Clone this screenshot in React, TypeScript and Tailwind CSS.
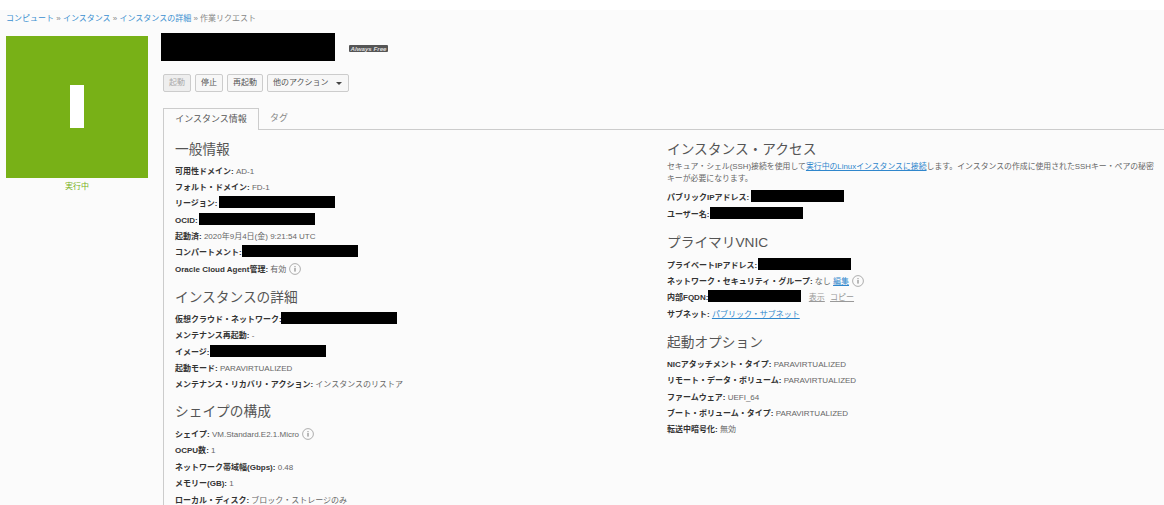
const font = { fontFamily: '"Liberation Sans", "Noto Sans CJK JP", sans-serif' };

function Info() {
  return (
    <svg width="12" height="12" viewBox="0 0 12 12" className="inline-block ml-[3px] align-[-3px]">
      <circle cx="6" cy="6" r="5.4" fill="none" stroke="#999" strokeWidth="0.8" />
      <rect x="5.5" y="5" width="1" height="3.6" fill="#777" />
      <rect x="5.5" y="3.2" width="1" height="1" fill="#777" />
    </svg>
  );
}

function Redact({ className }: { className: string }) {
  return <span className={`inline-block h-[12px] bg-black align-[-2px] ${className}`} />;
}

function Row({ label, children }: { label: string; children?: React.ReactNode }) {
  return (
    <div className="h-[16.35px] leading-[16.35px] whitespace-nowrap text-[8px] text-[#666]">
      <span className="font-bold text-[#333]">{label}:</span> {children}
    </div>
  );
}

function Heading({ children }: { children: React.ReactNode }) {
  return <h3 className="text-[13.7px] leading-[20px] text-[#555] font-normal">{children}</h3>;
}

function Btn({ children, off }: { children: React.ReactNode; off?: boolean }) {
  return (
    <button
      className={`h-[18px] px-[5px] flex items-center gap-[6px] text-[8px] border border-[#ccc] rounded-[2px] ${
        off ? "bg-[#eee] text-[#aaa]" : "bg-[#f7f7f7] text-[#555]"
      }`}
    >
      {children}
    </button>
  );
}

export default function App() {
  return (
    <div style={font} className="w-[1164px] h-[505px] overflow-hidden bg-white pt-[10px]">
      <div className="h-[495px] bg-[#fbfbfb] px-[6px]">
        <div className="h-[26px] pt-[4px] text-[8px] leading-[10px] text-[#888] whitespace-nowrap">
          <a className="text-[#3a8fd0]">コンピュート</a> » <a className="text-[#3a8fd0]">インスタンス</a> »{" "}
          <a className="text-[#3a8fd0]">インスタンスの詳細</a> » 作業リクエスト
        </div>

        <div className="flex">
          <div className="w-[142px] shrink-0">
            <div className="w-[142px] h-[142px] bg-[#78b117] flex items-center justify-center">
              <div className="w-[14px] h-[43px] -mt-[1px] bg-white" />
            </div>
            <div className="mt-[3px] text-center text-[8px] leading-[12px] text-[#78b117]">実行中</div>
          </div>

          <div className="ml-[13px] flex-1 min-w-0">
            <div className="flex items-start -mt-[3px]">
              <div className="w-[174px] h-[28px] bg-black" />
              <span className="ml-[14px] mt-[12px] w-[39px] h-[7px] rounded-[1px] bg-[#555] text-[#ddd] text-[6.2px] leading-[7px] font-bold italic text-center whitespace-nowrap">
                Always Free
              </span>
            </div>

            <div className="flex gap-[4px] mt-[13px] ml-[2px]">
              <Btn off>起動</Btn>
              <Btn>停止</Btn>
              <Btn>再起動</Btn>
              <Btn>
                他のアクション
                <span className="w-0 h-0 border-x-[3px] border-x-transparent border-t-[3px] border-t-[#444] ml-[1px] mr-[1px]" />
              </Btn>
            </div>

            <div className="flex h-[22px] mt-[16px] ml-[2px] mr-[-6px] border-b border-[#ccc] text-[9px]">
              <div className="w-[96px] h-[22px] border border-b-0 border-[#ccc] bg-[#fbfbfb] text-[#555] flex items-center justify-center">
                インスタンス情報
              </div>
              <div className="ml-[11px] pt-[4px] text-[#888]">タグ</div>
            </div>

            <div className="flex ml-[2px] border-l border-[#ccc] h-[400px] pl-[11px]">
              <div className="w-[492px] shrink-0">
                <div className="pt-[10px]">
                  <Heading>一般情報</Heading>
                </div>
                <div className="mt-[3.5px]">
                  <Row label="可用性ドメイン">AD-1</Row>
                  <Row label="フォルト・ドメイン">FD-1</Row>
                  <Row label="リージョン"><Redact className="w-[116px] -ml-[1px]" /></Row>
                  <Row label="OCID"><Redact className="w-[116px] -ml-[1px]" /></Row>
                  <Row label="起動済">2020年9月4日(金) 9:21:54 UTC</Row>
                  <Row label="コンパートメント"><Redact className="w-[116px] -ml-[2px]" /></Row>
                  <Row label="Oracle Cloud Agent管理">有効<Info /></Row>
                </div>
                <div className="mt-[10.5px]"><Heading>インスタンスの詳細</Heading></div>
                <div className="mt-[3.5px]">
                  <Row label="仮想クラウド・ネットワーク"><Redact className="w-[116px] -ml-[3px]" /></Row>
                  <Row label="メンテナンス再起動">-</Row>
                  <Row label="イメージ"><Redact className="w-[116px] -ml-[2px]" /></Row>
                  <Row label="起動モード">PARAVIRTUALIZED</Row>
                  <Row label="メンテナンス・リカバリ・アクション">インスタンスのリストア</Row>
                </div>
                <div className="mt-[8.5px]"><Heading>シェイプの構成</Heading></div>
                <div className="mt-[5px]">
                  <Row label="シェイプ">VM.Standard.E2.1.Micro<Info /></Row>
                  <Row label="OCPU数">1</Row>
                  <Row label="ネットワーク帯域幅(Gbps)">0.48</Row>
                  <Row label="メモリー(GB)">1</Row>
                  <Row label="ローカル・ディスク">ブロック・ストレージのみ</Row>
                </div>
              </div>

              <div className="flex-1 min-w-0">
                <div className="pt-[10px]"><Heading>インスタンス・アクセス</Heading></div>
                <p className="mt-[1px] text-[7.87px] leading-[12px] text-[#666] w-[490px]">
                  セキュア・シェル(SSH)接続を使用して<a className="text-[#2f86cc] underline">実行中のLinuxインスタンスに接続</a>します。インスタンスの作成に使用されたSSHキー・ペアの秘密キーが必要になります。
                </p>
                <div className="mt-[5.4px]">
                  <Row label="パブリックIPアドレス"><Redact className="w-[93px]" /></Row>
                  <Row label="ユーザー名"><Redact className="w-[93px] -ml-[2px]" /></Row>
                </div>
                <div className="mt-[9.6px]"><Heading>プライマリVNIC</Heading></div>
                <div className="mt-[5px]">
                  <Row label="プライベートIPアドレス"><Redact className="w-[93px] -ml-[1px]" /></Row>
                  <Row label="ネットワーク・セキュリティ・グループ">
                    なし <a className="text-[#2f86cc] underline">編集</a><Info />
                  </Row>
                  <Row label="内部FQDN">
                    <Redact className="w-[93px] -ml-[3px]" /> <span className="ml-[6px] text-[#999] underline">表示</span>{" "}
                    <span className="ml-[3px] text-[#999] underline">コピー</span>
                  </Row>
                  <Row label="サブネット"><a className="text-[#2f86cc] underline">パブリック・サブネット</a></Row>
                </div>
                <div className="mt-[10px]"><Heading>起動オプション</Heading></div>
                <div className="mt-[4px]">
                  <Row label="NICアタッチメント・タイプ">PARAVIRTUALIZED</Row>
                  <Row label="リモート・データ・ボリューム">PARAVIRTUALIZED</Row>
                  <Row label="ファームウェア">UEFI_64</Row>
                  <Row label="ブート・ボリューム・タイプ">PARAVIRTUALIZED</Row>
                  <Row label="転送中暗号化">無効</Row>
                </div>
              </div>
            </div>
          </div>
        </div>
      </div>
    </div>
  );
}
